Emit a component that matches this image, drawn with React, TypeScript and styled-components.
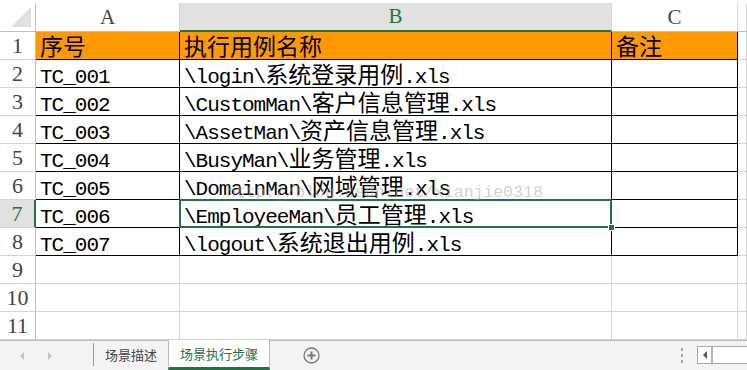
import React from 'react';
import styled, { createGlobalStyle, css } from 'styled-components';

const GREEN = '#217346';
const GRID = '#d4d4d4';
const INK = '#000000';

const GlobalStyle = createGlobalStyle`
  html, body {
    margin: 0;
    padding: 0;
    background: #ffffff;
  }
  body {
    font-family: "Noto Sans CJK SC", "Liberation Sans", sans-serif;
  }
`;

const Window = styled.div`
  width: 747px;
  height: 370px;
  overflow: hidden;
  display: flex;
  flex-direction: column;
  background: #ffffff;
`;

const Sheet = styled.div`
  position: relative;
  padding-top: 3px;
  display: grid;
  grid-template-columns: 36px 144px 432px 126px 1fr;
  grid-template-rows: 29px repeat(11, 28px);
`;

const Corner = styled.div`
  box-sizing: border-box;
  border-right: 1px solid #bfbfbf;
  border-bottom: 1px solid #bfbfbf;
  position: relative;
  &::after {
    content: '';
    position: absolute;
    right: 4px;
    bottom: 4px;
    width: 0;
    height: 0;
    border-left: 20px solid transparent;
    border-bottom: 20px solid #dfdfdf;
  }
`;

const ColHead = styled.div<{ $selected?: boolean }>`
  box-sizing: border-box;
  display: flex;
  align-items: center;
  justify-content: center;
  font-family: "Liberation Serif", "DejaVu Serif", serif;
  font-size: 21px;
  color: #444444;
  border-right: 1px solid ${GRID};
  border-bottom: 1px solid #bfbfbf;
  ${({ $selected }) =>
    $selected &&
    css`
      background: #e1e1e1;
      color: ${GREEN};
      border-bottom: 2px solid ${GREEN};
    `}
`;

const RowHead = styled.div<{ $selected?: boolean }>`
  box-sizing: border-box;
  display: flex;
  align-items: center;
  justify-content: center;
  font-family: "Liberation Serif", "DejaVu Serif", serif;
  font-size: 22px;
  color: #444444;
  border-right: 1px solid #bfbfbf;
  border-bottom: 1px solid ${GRID};
  ${({ $selected }) =>
    $selected &&
    css`
      background: #e1e1e1;
      color: ${GREEN};
      border-right: 2px solid ${GREEN};
    `}
`;

const Cell = styled.div<{ $filled?: boolean; $ruled?: boolean; $active?: boolean }>`
  box-sizing: border-box;
  position: relative;
  padding-left: 4px;
  font-size: 23px;
  line-height: 27px;
  white-space: nowrap;
  color: #000000;
  border-right: 1px solid ${({ $ruled }) => ($ruled ? INK : GRID)};
  border-bottom: 1px solid ${({ $ruled }) => ($ruled ? INK : GRID)};
  background: ${({ $filled }) => ($filled ? '#ff9900' : 'transparent')};
  ${({ $active }) =>
    $active &&
    css`
      &::after {
        content: '';
        position: absolute;
        left: -1px;
        top: -1px;
        right: -1px;
        bottom: -1px;
        border: 2px solid ${GREEN};
        pointer-events: none;
      }
      &::before {
        content: '';
        position: absolute;
        right: -4px;
        bottom: -4px;
        width: 5px;
        height: 5px;
        background: ${GREEN};
        border: 1px solid #ffffff;
        z-index: 2;
      }
    `}
`;

const Ascii = styled.span`
  font-family: "Liberation Mono", "DejaVu Sans Mono", monospace;
  font-size: 21px;
  letter-spacing: -1px;
`;

const Watermark = styled.div`
  position: absolute;
  left: 226px;
  top: 183px;
  font-family: "Liberation Mono", monospace;
  font-size: 16.5px;
  color: rgba(170, 170, 170, 0.55);
  white-space: nowrap;
  pointer-events: none;
`;

const TabBar = styled.div`
  box-sizing: border-box;
  height: 30px;
  background: #f3f3f3;
  border-top: 1px solid #bdbdbd;
  display: flex;
  align-items: stretch;
`;

const NavArea = styled.div`
  width: 93px;
  display: flex;
  align-items: center;
  padding-left: 20px;
  gap: 24px;
  box-sizing: border-box;
`;

const Arrow = styled.span<{ $dir: 'left' | 'right' }>`
  width: 0;
  height: 0;
  border-top: 4px solid transparent;
  border-bottom: 4px solid transparent;
  ${({ $dir }) =>
    $dir === 'left'
      ? css`border-right: 4px solid #c4c4c4;`
      : css`border-left: 4px solid #c4c4c4;`}
`;

const Divider = styled.span`
  width: 1px;
  margin: 2px 0 4px;
  background: #9a9a9a;
`;

const Tab = styled.div<{ $active?: boolean }>`
  box-sizing: border-box;
  display: flex;
  align-items: center;
  padding: 0 11px 2px 11px;
  font-size: 13px;
  color: #444444;
  ${({ $active }) =>
    $active &&
    css`
      margin-top: -1px;
      padding: 0 11px 0 11px;
      background: #ffffff;
      color: ${GREEN};
      border-left: 1px solid #bdbdbd;
      border-right: 1px solid #bdbdbd;
      border-bottom: 3px solid ${GREEN};
    `}
`;

const AddButton = styled.div`
  margin-left: 33px;
  display: flex;
  align-items: center;
`;

const Spacer = styled.div`
  flex: 1;
`;

const Dots = styled.div`
  display: flex;
  flex-direction: column;
  justify-content: center;
  gap: 3px;
  margin-right: 14px;
  span {
    width: 2px;
    height: 3px;
    background: #a8a8a8;
  }
`;

const ScrollBox = styled.div`
  box-sizing: border-box;
  width: 50px;
  margin: 5px 0 6px;
  border: 1px solid #a8a8a8;
  border-right: none;
  background: #ffffff;
  display: flex;
  align-items: center;
`;

const ScrollArrow = styled.div`
  width: 13px;
  height: 100%;
  border-right: 2px solid #b5b5b5;
  display: flex;
  align-items: center;
  justify-content: center;
  &::after {
    content: '';
    border-top: 4px solid transparent;
    border-bottom: 4px solid transparent;
    border-right: 4px solid #555555;
  }
`;

const rows: string[][] = [
  ['序号', '执行用例名称', '备注'],
  ['TC_001', '\\login\\系统登录用例.xls', ''],
  ['TC_002', '\\CustomMan\\客户信息管理.xls', ''],
  ['TC_003', '\\AssetMan\\资产信息管理.xls', ''],
  ['TC_004', '\\BusyMan\\业务管理.xls', ''],
  ['TC_005', '\\DomainMan\\网域管理.xls', ''],
  ['TC_006', '\\EmployeeMan\\员工管理.xls', ''],
  ['TC_007', '\\logout\\系统退出用例.xls', ''],
  ['', '', ''],
  ['', '', ''],
  ['', '', ''],
];

// ascii runs are set in a narrower mono face, like SimSun half-width glyphs
const Text = ({ value }: { value: string }) => (
  <>
    {value.split(/([\x00-\x7f]+)/).map((part, i) =>
      !part ? null : /^[\x00-\x7f]+$/.test(part) ? (
        <Ascii key={i}>{part}</Ascii>
      ) : (
        <span key={i}>{part}</span>
      ),
    )}
  </>
);

const App = () => (
  <Window>
    <GlobalStyle />
    <Sheet>
      <Corner />
      <ColHead>A</ColHead>
      <ColHead $selected>B</ColHead>
      <ColHead>C</ColHead>
      <ColHead />
      {rows.map((row, r) => (
        <React.Fragment key={r}>
          <RowHead $selected={r === 6}>{r + 1}</RowHead>
          {row.map((value, c) => (
            <Cell key={c} $filled={r === 0} $ruled={r < 8} $active={r === 6 && c === 1}>
              <Text value={value} />
            </Cell>
          ))}
          <Cell />
        </React.Fragment>
      ))}
      <Watermark>http://blog.csdn.net/xianjie0318</Watermark>
    </Sheet>
    <TabBar>
      <NavArea>
        <Arrow $dir="left" />
        <Arrow $dir="right" />
      </NavArea>
      <Divider />
      <Tab>场景描述</Tab>
      <Tab $active>场景执行步骤</Tab>
      <AddButton>
        <svg width="17" height="17" viewBox="0 0 17 17">
          <circle cx="8.5" cy="8.5" r="7.5" fill="none" stroke="#7a7a7a" strokeWidth="1.3" />
          <path d="M8.5 4.5v8M4.5 8.5h8" stroke="#7a7a7a" strokeWidth="2" />
        </svg>
      </AddButton>
      <Spacer />
      <Dots>
        <span />
        <span />
        <span />
      </Dots>
      <ScrollBox>
        <ScrollArrow />
      </ScrollBox>
    </TabBar>
  </Window>
);

export default App;
